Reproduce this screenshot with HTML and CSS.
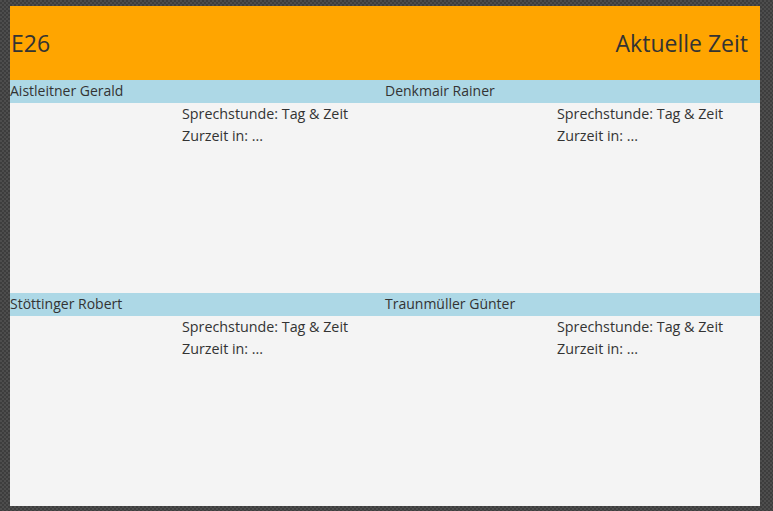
FILE: index.html
```html
<!DOCTYPE html>
<html lang="de">
<head>
<meta charset="utf-8">
<title>E26</title>
<link rel="stylesheet" href="styles.css">
</head>
<body>
<div class="page">
  <header class="header">
    <span class="room">E26</span>
    <span class="clock">Aktuelle Zeit</span>
  </header>
  <main class="grid">
    <section class="card">
      <div class="name">Aistleitner Gerald</div>
      <div class="body">
        <div class="photo"></div>
        <div class="info">
          <div>Sprechstunde: Tag &amp; Zeit</div>
          <div>Zurzeit in: ...</div>
        </div>
      </div>
    </section>
    <section class="card">
      <div class="name">Denkmair Rainer</div>
      <div class="body">
        <div class="photo"></div>
        <div class="info">
          <div>Sprechstunde: Tag &amp; Zeit</div>
          <div>Zurzeit in: ...</div>
        </div>
      </div>
    </section>
    <section class="card">
      <div class="name">Stöttinger Robert</div>
      <div class="body">
        <div class="photo"></div>
        <div class="info">
          <div>Sprechstunde: Tag &amp; Zeit</div>
          <div>Zurzeit in: ...</div>
        </div>
      </div>
    </section>
    <section class="card">
      <div class="name">Traunmüller Günter</div>
      <div class="body">
        <div class="photo"></div>
        <div class="info">
          <div>Sprechstunde: Tag &amp; Zeit</div>
          <div>Zurzeit in: ...</div>
        </div>
      </div>
    </section>
  </main>
</div>
</body>
</html>
```

FILE: styles.css
```css
html, body {
  margin: 0;
  padding: 0;
}
body {
  height: 511px;
  overflow: hidden;
  background-color: #454545;
  background-image: repeating-conic-gradient(#3d3d3d 0 25%, #4d4d4d 0 50%);
  background-size: 4px 4px;
  font-family: "Open Sans", "Noto Sans", sans-serif;
  color: #333333;
}
.page {
  width: 750px;
  margin: 6px 0 0 10px;
  background: #f4f4f4;
}
.header {
  height: 74px;
  background: #ffa500;
  display: flex;
  justify-content: space-between;
  align-items: center;
  padding: 0 12px 0 1px;
  font-size: 23px;
}
.grid {
  display: grid;
  grid-template-columns: 375px 375px;
  grid-template-rows: 213px 213px;
}
.name {
  height: 23px;
  line-height: 22px;
  background: #add8e6;
  padding-left: 0;
  font-size: 14px;
}
.body {
  display: grid;
  grid-template-columns: 172px 1fr;
}
.info {
  font-size: 14.3px;
  line-height: 22px;
}
```
